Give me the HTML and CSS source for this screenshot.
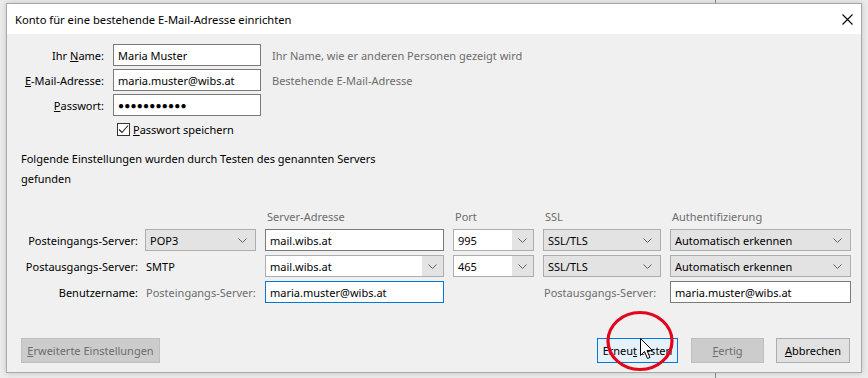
FILE: index.html
```html
<!DOCTYPE html>
<html lang="de">
<head>
    <meta charset="UTF-8">
    <title>Konto einrichten</title>
    <link rel="stylesheet" href="styles.css">
</head>
<body>
    <div class="window">
        <div class="titlebar">
            <span class="title">Konto für eine bestehende E-Mail-Adresse einrichten</span>
            <svg class="close" width="11" height="11" viewBox="0 0 11 11"><path d="M0.5 0.5 L10.5 10.5 M10.5 0.5 L0.5 10.5" stroke="#000" stroke-width="1.1" fill="none"/></svg>
        </div>
        <div class="content">
            <div class="identity">
                <label class="lbl">Ihr <u>N</u>ame:</label>
                <input class="field" type="text" value="Maria Muster">
                <span class="hint">Ihr Name, wie er anderen Personen gezeigt wird</span>

                <label class="lbl"><u>E</u>-Mail-Adresse:</label>
                <input class="field" type="text" value="maria.muster@wibs.at">
                <span class="hint">Bestehende E-Mail-Adresse</span>

                <label class="lbl"><u>P</u>asswort:</label>
                <div class="field secret">●●●●●●●●●●●</div>
                <span></span>

                <span></span>
                <label class="remember">
                    <span class="check"><svg width="11" height="11" viewBox="0 0 11 11"><path d="M1 5.5 L4 8.5 L10 1.5" stroke="#222" stroke-width="1.1" fill="none"/></svg></span>
                    <span><u>P</u>asswort speichern</span>
                </label>
            </div>

            <p class="found">Folgende Einstellungen wurden durch Testen des genannten Servers<br>gefunden</p>

            <div class="servers">
                <span></span>
                <span></span>
                <span class="head">Server-Adresse</span>
                <span class="head">Port</span>
                <span class="head">SSL</span>
                <span class="head">Authentifizierung</span>

                <span class="srv-lbl">Posteingangs-Server:</span>
                <div class="select"><span>POP3</span><svg class="chev" width="9" height="5" viewBox="0 0 9 5"><path d="M0.5 0.5 L4.5 4.5 L8.5 0.5" stroke="#606060" fill="none"/></svg></div>
                <input class="field" type="text" value="mail.wibs.at">
                <div class="combo"><span class="val">995</span><span class="drop"><svg width="9" height="5" viewBox="0 0 9 5"><path d="M0.5 0.5 L4.5 4.5 L8.5 0.5" stroke="#606060" fill="none"/></svg></span></div>
                <div class="select"><span>SSL/TLS</span><svg class="chev" width="9" height="5" viewBox="0 0 9 5"><path d="M0.5 0.5 L4.5 4.5 L8.5 0.5" stroke="#606060" fill="none"/></svg></div>
                <div class="select"><span>Automatisch erkennen</span><svg class="chev" width="9" height="5" viewBox="0 0 9 5"><path d="M0.5 0.5 L4.5 4.5 L8.5 0.5" stroke="#606060" fill="none"/></svg></div>

                <span class="srv-lbl">Postausgangs-Server:</span>
                <span class="plain">SMTP</span>
                <div class="combo"><span class="val">mail.wibs.at</span><span class="drop"><svg width="9" height="5" viewBox="0 0 9 5"><path d="M0.5 0.5 L4.5 4.5 L8.5 0.5" stroke="#606060" fill="none"/></svg></span></div>
                <div class="combo"><span class="val">465</span><span class="drop"><svg width="9" height="5" viewBox="0 0 9 5"><path d="M0.5 0.5 L4.5 4.5 L8.5 0.5" stroke="#606060" fill="none"/></svg></span></div>
                <div class="select"><span>SSL/TLS</span><svg class="chev" width="9" height="5" viewBox="0 0 9 5"><path d="M0.5 0.5 L4.5 4.5 L8.5 0.5" stroke="#606060" fill="none"/></svg></div>
                <div class="select"><span>Automatisch erkennen</span><svg class="chev" width="9" height="5" viewBox="0 0 9 5"><path d="M0.5 0.5 L4.5 4.5 L8.5 0.5" stroke="#606060" fill="none"/></svg></div>

                <span class="srv-lbl">Benutzername:</span>
                <span class="plain muted">Posteingangs-Server:</span>
                <input class="field focus" type="text" value="maria.muster@wibs.at">
                <span></span>
                <span class="plain muted">Postausgangs-Server:</span>
                <input class="field" type="text" value="maria.muster@wibs.at">
            </div>

            <div class="footer">
                <button class="btn wide" disabled><u>E</u>rweiterte Einstellungen</button>
                <span class="spacer"></span>
                <button class="btn default">Erneu<u>t</u> testen</button>
                <button class="btn done" disabled><u>F</u>ertig</button>
                <button class="btn"><u>A</u>bbrechen</button>
            </div>
        </div>
    </div>

    <svg class="marker" width="80" height="70" viewBox="0 0 80 70">
        <ellipse cx="40" cy="35" rx="32" ry="28.5" fill="none" stroke="#e2061b" stroke-width="3.2"/>
        <path d="M40.5 32.5 L40.5 49.5 L44.5 45.5 L47.5 52.5 L50 51.5 L47 44.5 L52.5 44.5 Z" fill="#fff" stroke="#000" stroke-width="1" stroke-linejoin="round"/>
    </svg>
</body>
</html>
```

FILE: styles.css
```css
body {
    margin: 0;
    width: 868px;
    height: 378px;
    overflow: hidden;
    position: relative;
    font-family: "Segoe UI", "Noto Sans", sans-serif;
    font-size: 11px;
    color: #000;
    white-space: nowrap;
    background: linear-gradient(to right, transparent 715px, #8a8a8a 715px, #8a8a8a 716px, transparent 716px), #ececec;
}
.window {
    box-sizing: border-box;
    width: 856px;
    height: 370px;
    margin: 3px 0 0 6px;
    border: 1px solid #a8a8a8;
    background: #f0f0f0;
    box-shadow: 0 0 6px rgba(0, 0, 0, 0.18);
    display: flex;
    flex-direction: column;
}
.titlebar {
    height: 30px;
    background: #fff;
    display: flex;
    align-items: center;
    justify-content: space-between;
    padding: 0 8px 0 8px;
    flex-shrink: 0;
}
.title {
    font-size: 11.2px;
}
.content {
    flex: 1;
    display: flex;
    flex-direction: column;
    padding: 10px 11px 9px 14px;
}
.identity {
    display: grid;
    grid-template-columns: 83px 148px 1fr;
    grid-auto-rows: 22px;
    column-gap: 9px;
    row-gap: 3px;
    align-items: center;
}
.lbl {
    text-align: right;
}
.field {
    box-sizing: border-box;
    height: 22px;
    margin: 0;
    border: 1px solid #7a7a7a;
    background: #fff;
    padding: 0 4px;
    font-family: inherit;
    font-size: 11px;
    color: #000;
    outline: none;
}
.secret {
    display: flex;
    align-items: center;
    font-size: 10px;
    letter-spacing: 0.2px;
}
.focus {
    border-color: #0078d7;
}
.hint {
    color: #6d6d6d;
    padding-left: 2px;
}
.remember {
    display: flex;
    align-items: center;
    gap: 3px;
    padding-left: 4px;
    height: 17px;
    align-self: start;
    margin-top: 2px;
}
.check {
    box-sizing: border-box;
    width: 13px;
    height: 13px;
    border: 1px solid #333;
    background: #fff;
    display: flex;
    align-items: center;
    justify-content: center;
}
.found {
    margin: 8px 0 20px 0;
    line-height: 20px;
}
.servers {
    display: grid;
    grid-template-columns: 115px 111px 179px 81px 118px 181px;
    grid-template-rows: 16px 22px 22px 22px;
    column-gap: 9px;
    row-gap: 4px;
    align-items: center;
}
.head {
    color: #6d6d6d;
    padding-left: 2px;
    line-height: 16px;
}
.srv-lbl {
    text-align: right;
    margin-right: -2px;
}
.plain {
    padding-left: 1px;
}
.muted {
    color: #6d6d6d;
}
.select {
    box-sizing: border-box;
    height: 22px;
    border: 1px solid #adadad;
    background: #e3e3e3;
    display: flex;
    align-items: center;
    justify-content: space-between;
    padding: 0 8px 0 4px;
}
.combo {
    box-sizing: border-box;
    height: 22px;
    border: 1px solid #adadad;
    background: #fff;
    display: flex;
    align-items: stretch;
}
.combo .val {
    flex: 1;
    display: flex;
    align-items: center;
    padding-left: 4px;
}
.combo .drop {
    width: 21px;
    background: #e3e3e3;
    display: flex;
    align-items: center;
    justify-content: center;
}
.footer {
    margin-top: auto;
    display: flex;
    align-items: center;
    gap: 12px;
}
.spacer {
    flex: 1;
}
.btn {
    box-sizing: border-box;
    height: 25px;
    margin: 0;
    padding: 0;
    width: 74px;
    border: 1px solid #adadad;
    background: #e1e1e1;
    font-family: inherit;
    font-size: 11px;
    color: #000;
}
.btn:disabled {
    background: #cccccc;
    border-color: #bfbfbf;
    color: #6d6d6d;
}
.default {
    border: 1px solid #0078d7;
    background: #e5f1fb;
    width: 81px;
    margin-right: 1px;
}
.done {
    width: 73px;
}
.wide {
    width: 139px;
}
.marker {
    position: absolute;
    left: 600px;
    top: 306px;
}
```
